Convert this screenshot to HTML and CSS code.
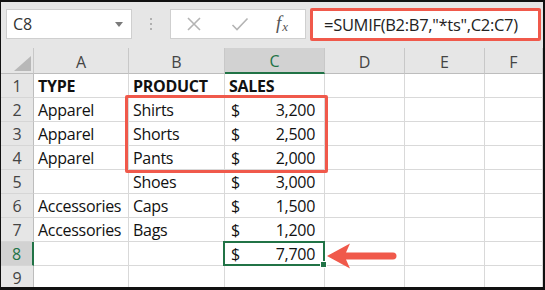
FILE: index.html
```html
<!DOCTYPE html>
<html>
<head>
<meta charset="utf-8">
<link rel="stylesheet" href="styles.css">
</head>
<body>
<div class="frame">
  <div class="toolbar">
    <div class="namebox">
      <span class="name">C8</span>
      <svg class="dd" width="8" height="5" viewBox="0 0 8 5"><path d="M0 0H8L4 5Z" fill="#7a7a7a"/></svg>
    </div>
    <div class="grip"><i></i><i></i><i></i></div>
    <div class="fbar">
      <div class="icons">
        <svg class="ic" width="16" height="16" viewBox="0 0 16 16"><path d="M2 2L14 14M14 2L2 14" stroke="#b4b4b4" stroke-width="1.6" fill="none"/></svg>
        <svg class="ic" width="18" height="16" viewBox="0 0 18 16"><path d="M1.5 9L6 13.5L16.5 2.5" stroke="#b4b4b4" stroke-width="1.6" fill="none"/></svg>
        <span class="fx"><i>f</i><sub>x</sub></span>
      </div>
      <div class="formula">=SUMIF(B2:B7,"*ts",C2:C7)</div>
    </div>
  </div>
  <div class="sheet">
    <div class="grid">
      <div class="hd corner"><svg width="17" height="15" viewBox="0 0 17 15"><path d="M17 0V15H0Z" fill="#b8b8b8"/></svg></div>
      <div class="hd col">A</div><div class="hd col">B</div><div class="hd col sel">C</div><div class="hd col">D</div><div class="hd col">E</div><div class="hd col">F</div>

      <div class="hd row">1</div><div class="c b">TYPE</div><div class="c b">PRODUCT</div><div class="c b">SALES</div><div class="c"></div><div class="c"></div><div class="c"></div>

      <div class="hd row">2</div><div class="c">Apparel</div><div class="c">Shirts</div><div class="c acc"><span>$</span><span>3,200</span></div><div class="c"></div><div class="c"></div><div class="c"></div>

      <div class="hd row">3</div><div class="c">Apparel</div><div class="c">Shorts</div><div class="c acc"><span>$</span><span>2,500</span></div><div class="c"></div><div class="c"></div><div class="c"></div>

      <div class="hd row">4</div><div class="c">Apparel</div><div class="c">Pants</div><div class="c acc"><span>$</span><span>2,000</span></div><div class="c"></div><div class="c"></div><div class="c"></div>

      <div class="hd row">5</div><div class="c"></div><div class="c">Shoes</div><div class="c acc"><span>$</span><span>3,000</span></div><div class="c"></div><div class="c"></div><div class="c"></div>

      <div class="hd row">6</div><div class="c">Accessories</div><div class="c">Caps</div><div class="c acc"><span>$</span><span>1,500</span></div><div class="c"></div><div class="c"></div><div class="c"></div>

      <div class="hd row">7</div><div class="c">Accessories</div><div class="c">Bags</div><div class="c acc"><span>$</span><span>1,200</span></div><div class="c"></div><div class="c"></div><div class="c"></div>

      <div class="hd row sel">8</div><div class="c"></div><div class="c"></div><div class="c acc active"><span>$</span><span>7,700</span></div><div class="c"></div><div class="c"></div><div class="c"></div>

      <div class="hd row">9</div><div class="c"></div><div class="c"></div><div class="c"></div><div class="c"></div><div class="c"></div><div class="c"></div>
    </div>
    <div class="highlight"></div>
    <svg class="arrow" width="72" height="28" viewBox="0 0 72 28"><path d="M0 14L23 1.5L19 10.5H66a3.5 3.5 0 0 1 0 7H19L23 26.5Z" fill="#f0594b"/></svg>
  </div>
</div>
</body>
</html>
```
FILE: styles.css
```css
* { box-sizing: border-box; }
html, body { margin: 0; padding: 0; background: #fff; }
.frame {
  width: 545px;
  height: 290px;
  overflow: hidden;
  border-style: solid;
  border-color: #111;
  border-width: 2px 2px 3px 1px;
  background: #e6e6e6;
  font-family: "Open Sans", "Noto Sans", sans-serif;
  color: #222;
}
.toolbar {
  height: 46px;
  display: flex;
  align-items: flex-start;
  padding: 7px 0 0 5px;
}
.namebox {
  width: 126px;
  height: 30px;
  background: #fff;
  border: 1px solid #cfcfcf;
  display: flex;
  align-items: center;
  justify-content: space-between;
  padding: 0 8px 0 6px;
  font-size: 16px;
  color: #333;
}
.name { letter-spacing: -0.2px; }
.grip {
  width: 38px;
  height: 30px;
  display: flex;
  flex-direction: column;
  align-items: center;
  justify-content: center;
  gap: 3px;
}
.grip i { width: 2px; height: 2px; background: #b0b0b0; display: block; }
.fbar { display: flex; align-items: flex-start; gap: 4px; }
.icons {
  width: 136px;
  height: 30px;
  background: #fff;
  border: 1px solid #cfcfcf;
  display: flex;
  align-items: center;
  padding-left: 15px;
}
.ic:nth-child(1) { margin-right: 29px; }
.ic:nth-child(2) { margin-right: 27px; }
.fx {
  font-family: "Liberation Serif", "DejaVu Serif", serif;
  color: #555;
  font-size: 19px;
  line-height: 1;
  margin-top: -3px;
}
.fx i { font-style: italic; }
.fx sub { font-size: 13px; font-style: italic; vertical-align: -2px; margin-left: 1px; }
.formula {
  margin-top: -1px;
  width: 231px;
  height: 33px;
  background: #fff;
  border: 3px solid #f0594b;
  border-radius: 2px;
  display: flex;
  align-items: center;
  padding-left: 11px;
  font-size: 16.5px;
  color: #222;
  white-space: nowrap;
  letter-spacing: -0.3px;
}
.sheet { position: relative; }
.grid {
  display: grid;
  grid-template-columns: 33px 95px 96px 100px 80px 80px 1fr;
  grid-template-rows: 26px repeat(9, 24px);
  background: #fff;
}
.hd {
  background: #e6e6e6;
  color: #444;
  font-size: 16px;
  display: flex;
  align-items: center;
  justify-content: center;
}
.col {
  border-right: 1px solid #c8c8c8;
  border-bottom: 1px solid #bdbdbd;
  padding-top: 2px;
}
.corner {
  border-right: 1px solid #c8c8c8;
  border-bottom: 1px solid #bdbdbd;
  align-items: flex-end;
  justify-content: flex-end;
  padding: 0 2px 2px 0;
}
.row {
  border-right: 1px solid #bdbdbd;
  border-bottom: 1px solid #d6d6d6;
  color: #444;
}
.col.sel { background: #d2d2d2; color: #217346; border-bottom: 2px solid #217346; }
.row.sel { background: #d2d2d2; color: #217346; border-right: 2px solid #217346; }
.c {
  border-right: 1px solid #d9d9d9;
  border-bottom: 1px solid #d9d9d9;
  font-size: 16px;
  color: #111;
  padding: 0 4px;
  display: flex;
  align-items: center;
  white-space: nowrap;
  letter-spacing: -0.3px;
}
.b { font-weight: 700; }
.acc { justify-content: space-between; padding: 0 9px 0 6px; }
.active { position: relative; }
.active::after {
  content: "";
  position: absolute;
  left: -2px; top: -1px; right: -1px; bottom: -1px;
  border: 2px solid #217346;
}
.active::before {
  content: "";
  position: absolute;
  right: -3px; bottom: -3px;
  width: 5px; height: 5px;
  background: #217346;
  border: 1px solid #fff;
  z-index: 2;
}
.highlight {
  position: absolute;
  left: 124px; top: 47px;
  width: 203px; height: 78px;
  border: 3px solid #f0594b;
  border-radius: 2px;
  pointer-events: none;
}
.arrow { position: absolute; left: 326px; top: 194px; }
```
